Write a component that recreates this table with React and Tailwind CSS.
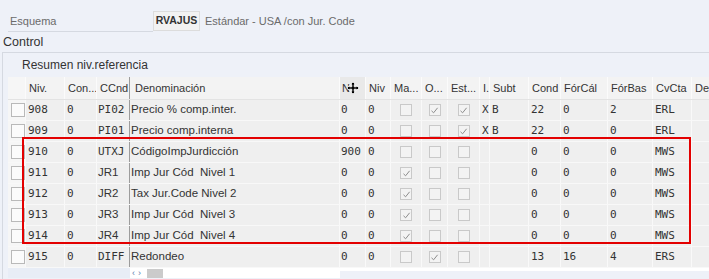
import React from "react";

const cols = [
  { key: "sel", w: "w-[18px]" },
  { key: "niv", label: "Niv.", w: "w-[39px]" },
  { key: "con", label: "Con...", w: "w-[32px]" },
  { key: "ccnd", label: "CCnd", w: "w-[33px]" },
  { key: "den", label: "Denominación", w: "w-[210px]" },
  { key: "n", label: "N", w: "w-[26px]" },
  { key: "niv2", label: "Niv", w: "w-[25px]" },
  { key: "ma", label: "Ma...", w: "w-[31px]" },
  { key: "o", label: "O...", w: "w-[26px]" },
  { key: "est", label: "Est...", w: "w-[32px]" },
  { key: "i", label: "I..", w: "w-[10px]" },
  { key: "subt", label: "Subt", w: "w-[39px]" },
  { key: "cond", label: "Cond", w: "w-[32px]" },
  { key: "fc", label: "FórCál", w: "w-[47px]" },
  { key: "fb", label: "FórBas", w: "w-[45px]" },
  { key: "cv", label: "CvCta", w: "w-[39px]" },
  { key: "del", label: "Del", w: "w-[40px]" },
];

const rows = [
  { niv: "908", con: "0", ccnd: "PI02", den: "Precio % comp.inter.", n: "0", niv2: "0", ma: false, o: true, est: true, i: "X", subt: "B", cond: "22", fc: "0", fb: "2", cv: "ERL" },
  { niv: "909", con: "0", ccnd: "PI01", den: "Precio comp.interna", n: "0", niv2: "0", ma: false, o: false, est: true, i: "X", subt: "B", cond: "22", fc: "0", fb: "0", cv: "ERL" },
  { niv: "910", con: "0", ccnd: "UTXJ", den: "CódigoImpJurdicción", n: "900", niv2: "0", ma: false, o: false, est: false, i: "", subt: "", cond: "0", fc: "0", fb: "0", cv: "MWS" },
  { niv: "911", con: "0", ccnd: "JR1", sans: true, den: "Imp Jur Cód  Nivel 1", n: "0", niv2: "0", ma: true, o: false, est: false, i: "", subt: "", cond: "0", fc: "0", fb: "0", cv: "MWS" },
  { niv: "912", con: "0", ccnd: "JR2", sans: true, den: "Tax Jur.Code Nivel 2", n: "0", niv2: "0", ma: true, o: false, est: false, i: "", subt: "", cond: "0", fc: "0", fb: "0", cv: "MWS" },
  { niv: "913", con: "0", ccnd: "JR3", sans: true, den: "Imp Jur Cód  Nivel 3", n: "0", niv2: "0", ma: true, o: false, est: false, i: "", subt: "", cond: "0", fc: "0", fb: "0", cv: "MWS" },
  { niv: "914", con: "0", ccnd: "JR4", sans: true, den: "Imp Jur Cód  Nivel 4", n: "0", niv2: "0", ma: true, o: false, est: false, i: "", subt: "", cond: "0", fc: "0", fb: "0", cv: "MWS" },
  { niv: "915", con: "0", ccnd: "DIFF", den: "Redondeo", n: "0", niv2: "0", ma: false, o: true, est: false, i: "", subt: "", cond: "13", fc: "16", fb: "4", cv: "ERS" },
];

const sans = "font-['Liberation_Sans',Arial,sans-serif]";
const mono = "font-['DejaVu_Sans_Mono',monospace]";

const SmallCheck = ({ checked }) => (
  <div className="w-[12px] h-[12px] border border-[#c9c9c9] bg-[#f3f3f3] flex items-center justify-center">
    {checked && (
      <svg width="9" height="9" viewBox="0 0 9 9">
        <path d="M1.5 4.8 L3.6 6.8 L7.6 1.8" fill="none" stroke="#8c8c8c" strokeWidth="1" />
      </svg>
    )}
  </div>
);

const MoveCursor = () => (
  <svg width="14" height="14" viewBox="0 0 14 14" className="absolute left-[6px] top-[4px]">
    <path
      d="M7 0.8 L9.6 3.6 L8.2 3.6 L8.2 5.8 L10.4 5.8 L10.4 4.4 L13.2 7 L10.4 9.6 L10.4 8.2 L8.2 8.2 L8.2 10.4 L9.6 10.4 L7 13.2 L4.4 10.4 L5.8 10.4 L5.8 8.2 L3.6 8.2 L3.6 9.6 L0.8 7 L3.6 4.4 L3.6 5.8 L5.8 5.8 L5.8 3.6 L4.4 3.6 Z"
      fill="#000"
      stroke="#fff"
      strokeWidth="0.9"
      strokeLinejoin="round"
    />
  </svg>
);

const boolCols = ["ma", "o", "est"];
const monoCols = ["niv", "con", "n", "niv2", "i", "subt", "cond", "fc", "fb", "cv"];

const DataCell = ({ col, row }) => {
  const base = `${col.w} shrink-0 h-full border-r border-[#f9f9f9] flex items-center overflow-hidden whitespace-pre`;
  if (col.key === "sel") {
    return (
      <div className={`${base} bg-[#f6f6f6] pl-[3px]`}>
        <div className="w-[14px] h-[14px] border border-[#b9b9b9] bg-[#fbfbfb]" />
      </div>
    );
  }
  if (boolCols.includes(col.key)) {
    return (
      <div className={`${base} justify-center`}>
        <SmallCheck checked={row[col.key]} />
      </div>
    );
  }
  if (col.key === "ccnd") {
    return (
      <div className={`${base} border-r-[#9c9c9c] pl-[1px] ${row.sans ? `${sans} text-[11.5px]` : `${mono} text-[11px]`}`}>
        {row.ccnd}
      </div>
    );
  }
  if (col.key === "den") {
    return <div className={`${base} ${sans} text-[11.5px] pl-[1px]`}>{row.den}</div>;
  }
  if (col.key === "n") {
    return <div className={`${base} ${mono} text-[11px] pl-[1px] overflow-visible`}>{row.n}</div>;
  }
  if (monoCols.includes(col.key)) {
    return <div className={`${base} ${mono} text-[11px] pl-[2px]`}>{row[col.key] || ""}</div>;
  }
  return <div className={base} />;
};

export default function App() {
  return (
    <div className={`relative w-[709px] h-[279px] overflow-hidden bg-[#eef1f8] text-[#333] ${sans}`}>
      {/* Esquema row */}
      <div className="flex items-end pt-[11px] h-[32px]">
        <div className="ml-[8px] w-[145px] h-[21px] border-b border-[#d5d9e1] flex items-center pl-[2px] text-[11px] text-[#6b6b6b]">
          Esquema
        </div>
        <div className="w-[47px] h-[20px] mb-[1px] border border-[#dcdcdc] bg-[#f2f2f2] flex items-center justify-center text-[10.5px] font-bold text-[#333]">
          RVAJUS
        </div>
        <div className="ml-[5px] h-[21px] flex items-center text-[11px] text-[#6b6b6b]">
          Estándar - USA /con Jur. Code
        </div>
      </div>

      {/* Control */}
      <div className="mt-[3px] ml-[3px] h-[14px] leading-[14px] text-[12.5px] text-[#333]">Control</div>

      <div className="mt-[3px] ml-[2px] border-t border-l border-[#d5d9e1] h-[240px]">
        <div className="h-[24px] flex items-center pl-[19px] text-[12px] text-[#333]">Resumen niv.referencia</div>

        <div className="ml-[5px]">
          {/* header */}
          <div className="flex h-[23px] bg-[#f3f3f3] border-b border-[#e3e3e3] text-[11px] text-[#333]">
            {cols.map((c) => (
              <div
                key={c.key}
                className={`${c.w} shrink-0 h-full flex items-center overflow-hidden whitespace-nowrap border-r ${
                  c.key === "ccnd" ? "border-[#9c9c9c]" : "border-[#fbfbfb]"
                } ${c.key === "sel" ? "bg-[#f6f6f6]" : ""} ${c.key === "n" ? "relative bg-[#e9e9e9] pl-[2px]" : "pl-[3px]"} ${
                  c.key === "den" ? "pl-[5px]" : ""
                }`}
              >
                {c.label}
                {c.key === "n" && <MoveCursor />}
              </div>
            ))}
          </div>

          {/* rows */}
          {rows.map((r) => (
            <div key={r.niv} className="flex h-[21px] bg-[#efefef] border-b border-[#f8f8f8] text-[#333]">
              {cols.map((c) => (
                <DataCell key={c.key} col={c} row={r} />
              ))}
            </div>
          ))}

          {/* horizontal scrollbar */}
          <div className="flex h-[10px]">
            <div className="w-[122px] h-full bg-[#e8edf6]" />
            <div className="w-[210px] h-full bg-white flex items-center">
              <span className="ml-[2px] text-[9px] leading-[9px] text-[#5a7fae] tracking-[3px]">‹›</span>
              <div className="ml-[3px] w-[16px] h-[9px] bg-[#cbcbcb]" />
            </div>
            <div className="flex-1 h-[3px] bg-white" />
          </div>
        </div>
      </div>

      {/* highlight box */}
      <div className="absolute left-[22px] top-[137px] w-[669px] h-[107px] border-2 border-[#e30000]" />
    </div>
  );
}
